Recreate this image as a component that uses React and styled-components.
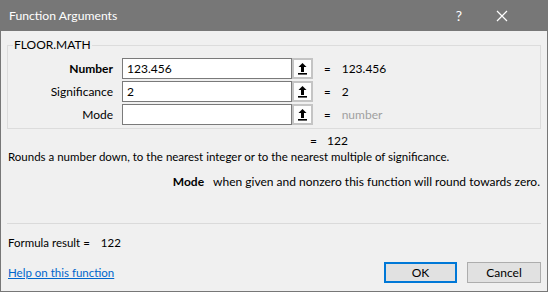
import React from 'react'
import styled, { createGlobalStyle } from 'styled-components'

const Global = createGlobalStyle`
  html, body { margin: 0; padding: 0; background: #f0f0f0; }
  * { box-sizing: border-box; }
  body { font-family: Lato, "Noto Sans", sans-serif; font-size: 11.5px; line-height: 16px; color: #000; }
`

const args = [
  { name: 'Number', value: '123.456', result: '123.456', bold: true },
  { name: 'Significance', value: '2', result: '2' },
  { name: 'Mode', value: '', result: 'number', muted: true },
]

export default function App() {
  return (
    <Window>
      <Global />
      <TitleBar>
        <Title>Function Arguments</Title>
        <TitleButtons>
          <TitleBtn>?</TitleBtn>
          <TitleBtn>
            <svg width="12" height="12" viewBox="0 0 12 12">
              <path d="M1 1 L11 11 M11 1 L1 11" stroke="#fff" strokeWidth="1.2" />
            </svg>
          </TitleBtn>
        </TitleButtons>
      </TitleBar>
      <Body>
        <Group>
          <Legend>FLOOR.MATH</Legend>
          {args.map((a) => (
            <ArgRow key={a.name}>
              <ArgLabel bold={a.bold}>{a.name}</ArgLabel>
              <ArgInput defaultValue={a.value} />
              <RefButton>
                <svg width="11" height="13" viewBox="0 0 11 13">
                  <path d="M5.5 1 L1.5 5 H4 V10 H7 V5 H9.5 Z" fill="#000" />
                  <rect x="1" y="11" width="9" height="1.6" fill="#000" />
                </svg>
              </RefButton>
              <Eq>=</Eq>
              <ArgValue muted={a.muted}>{a.result}</ArgValue>
            </ArgRow>
          ))}
        </Group>
        <Total>
          <span>=</span>
          <span>122</span>
        </Total>
        <Description>
          Rounds a number down, to the nearest integer or to the nearest multiple of significance.
        </Description>
        <ArgHelp>
          <b>Mode</b>
          <span>when given and nonzero this function will round towards zero.</span>
        </ArgHelp>
        <Spacer />
        <Separator />
        <FormulaResult>
          Formula result =<span>122</span>
        </FormulaResult>
        <Footer>
          <HelpLink href="#">Help on this function</HelpLink>
          <Buttons>
            <DlgButton primary>OK</DlgButton>
            <DlgButton>Cancel</DlgButton>
          </Buttons>
        </Footer>
      </Body>
    </Window>
  )
}

const Window = styled.div`
  width: 548px;
  height: 292px;
  border: 1px solid #777;
  border-top: none;
  display: flex;
  flex-direction: column;
  background: #f0f0f0;
`

const TitleBar = styled.div`
  height: 31px;
  background: #777;
  margin: 0 -1px;
  display: flex;
  align-items: center;
  justify-content: space-between;
  padding-left: 9px;
  color: #fff;
`

const Title = styled.div`
  font-size: 12.2px;
`

const TitleButtons = styled.div`
  display: flex;
  height: 100%;
  gap: 13px;
  padding-right: 31px;
`

const TitleBtn = styled.div`
  width: 30px;
  height: 100%;
  display: flex;
  align-items: center;
  justify-content: center;
  font-size: 14px;
`

const Body = styled.div`
  flex: 1;
  display: flex;
  flex-direction: column;
  padding: 6px 6px 8px 6px;
`

const Group = styled.fieldset`
  margin: 0;
  padding: 5px 0 3px 0;
  border: 1px solid #dcdcdc;
  display: flex;
  flex-direction: column;
  gap: 2px;
`

const Legend = styled.legend`
  padding: 0 1px;
  margin-left: 5px;
  font-size: 12px;
`

const ArgRow = styled.div`
  display: flex;
  align-items: center;
  height: 21px;
`

const ArgLabel = styled.div`
  width: 105px;
  text-align: right;
  font-weight: ${(p) => (p.bold ? 700 : 400)};
  font-size: 12px;
  margin-right: 9px;
`

const ArgInput = styled.input`
  width: 170px;
  height: 21px;
  border: 1px solid #7a7a7a;
  background: #fff;
  font: inherit;
  font-size: 12px;
  padding: 0 4px;
  outline: none;
`

const RefButton = styled.div`
  width: 21px;
  height: 21px;
  border: 2px solid #c4c4c4;
  background: #fdfdfd;
  display: flex;
  align-items: center;
  justify-content: center;
`

const Eq = styled.span`
  margin: 0 11px 0 11px;
`

const ArgValue = styled.span`
  font-size: 12px;
  color: ${(p) => (p.muted ? '#a0a0a0' : '#000')};
`

const Total = styled.div`
  display: flex;
  gap: 10px;
  padding-left: 303px;
  margin-top: 4px;
  font-size: 12px;
`

const Description = styled.div`
  padding-left: 1px;
`

const ArgHelp = styled.div`
  display: flex;
  justify-content: flex-end;
  gap: 9px;
  margin-top: 9px;
  padding-right: 1px;
  font-size: 12px;
`

const Spacer = styled.div`
  flex: 1;
`

const Separator = styled.div`
  height: 1px;
  background: #dadada;
`

const FormulaResult = styled.div`
  margin-top: 11px;
  padding-left: 1px;
  span { margin-left: 11px; }
`

const Footer = styled.div`
  display: flex;
  justify-content: space-between;
  align-items: center;
  margin-top: 11px;
`

const HelpLink = styled.a`
  color: #0066cc;
  text-decoration: underline;
  padding-left: 1px;
`

const Buttons = styled.div`
  display: flex;
  gap: 10px;
`

const DlgButton = styled.button`
  width: ${(p) => (p.primary ? '73px' : '74px')};
  height: 21px;
  font: inherit;
  font-size: 12px;
  background: #e1e1e1;
  border: ${(p) => (p.primary ? '2px solid #0078d7' : '1px solid #adadad')};
  padding: 0;
  color: #000;
`
